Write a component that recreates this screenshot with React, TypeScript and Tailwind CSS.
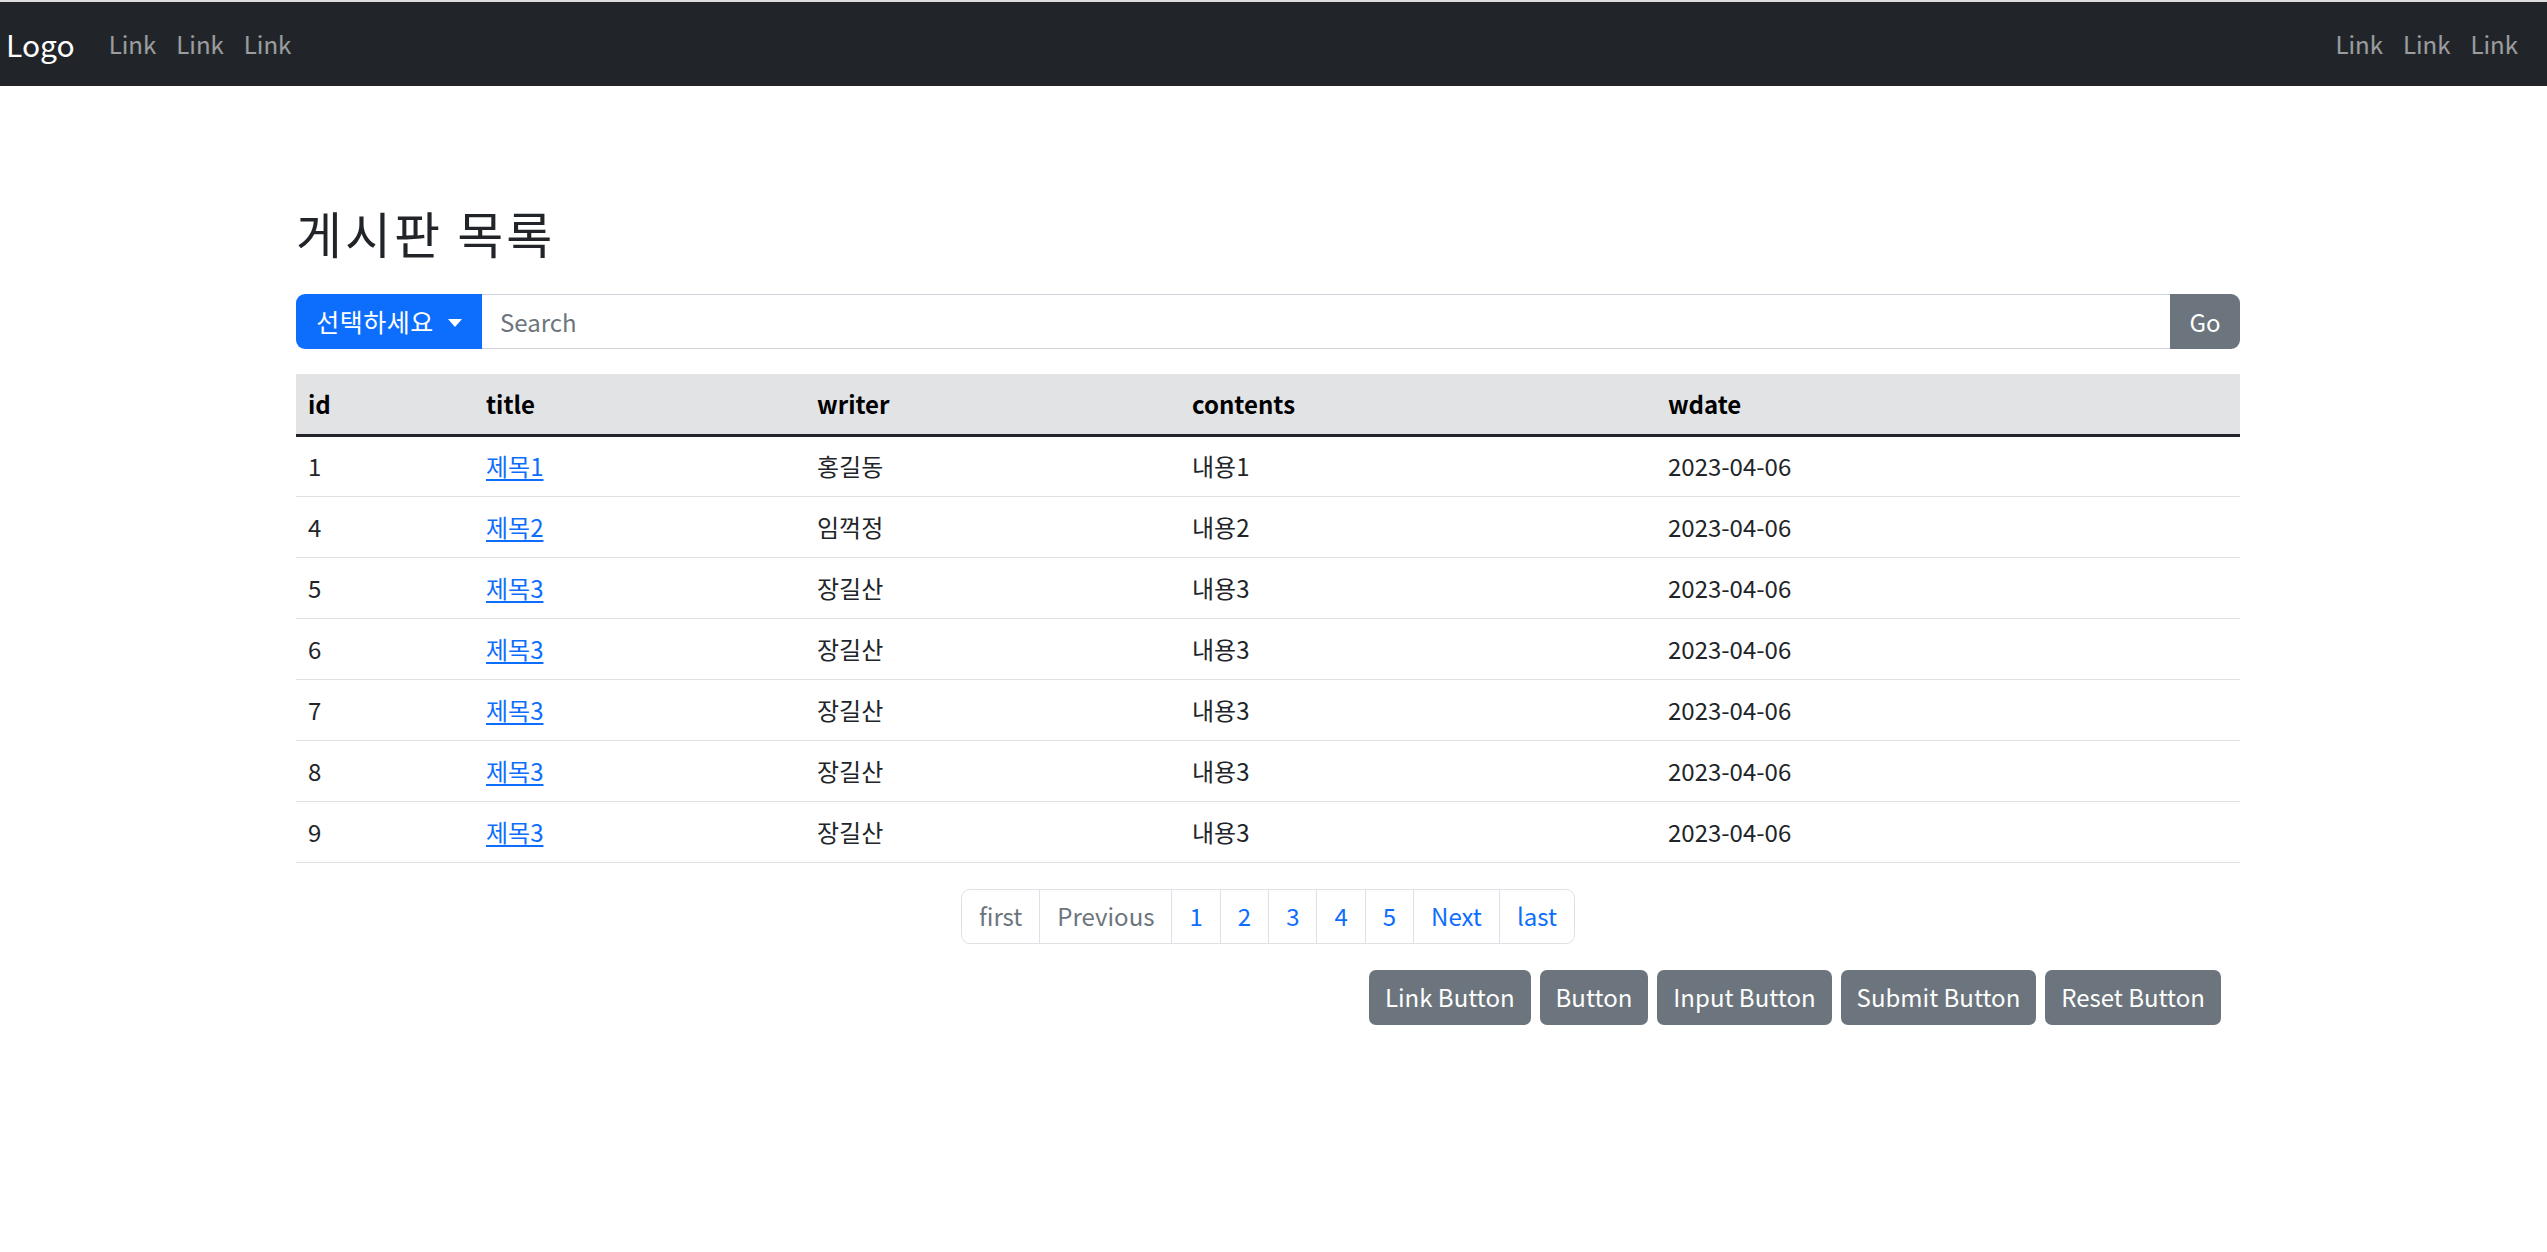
import React from 'react';

const FONT = '"Noto Sans CJK KR", "Noto Sans", sans-serif';

interface Post {
  id: number;
  title: string;
  writer: string;
  contents: string;
  wdate: string;
}

const POSTS: Post[] = [
  { id: 1, title: '제목1', writer: '홍길동', contents: '내용1', wdate: '2023-04-06' },
  { id: 4, title: '제목2', writer: '임꺽정', contents: '내용2', wdate: '2023-04-06' },
  { id: 5, title: '제목3', writer: '장길산', contents: '내용3', wdate: '2023-04-06' },
  { id: 6, title: '제목3', writer: '장길산', contents: '내용3', wdate: '2023-04-06' },
  { id: 7, title: '제목3', writer: '장길산', contents: '내용3', wdate: '2023-04-06' },
  { id: 8, title: '제목3', writer: '장길산', contents: '내용3', wdate: '2023-04-06' },
  { id: 9, title: '제목3', writer: '장길산', contents: '내용3', wdate: '2023-04-06' },
];

function Navbar() {
  const link = 'px-[10px] text-[24px] leading-[36px] text-white/55';
  return (
    <nav className="flex h-[86px] items-center justify-between border-t-2 border-[#dedede] bg-[#212529]">
      <div className="flex items-center pl-[6px]">
        <a className="mr-[24px] text-[30px] leading-[45px] text-white">Logo</a>
        <a className={link}>Link</a>
        <a className={link}>Link</a>
        <a className={link}>Link</a>
      </div>
      <div className="flex items-center pr-[19px]">
        <a className={link}>Link</a>
        <a className={link}>Link</a>
        <a className={link}>Link</a>
      </div>
    </nav>
  );
}

function SearchBar() {
  return (
    <div className="flex h-[55px] w-full">
      <button className="flex h-full w-[186px] items-center justify-center gap-[14px] rounded-l-[9px] bg-[#0d6efd] text-[25px] tracking-[0.5px] text-white">
        <span>선택하세요</span>
        <span className="mt-[2px] h-0 w-0 border-x-[7px] border-t-[8px] border-x-transparent border-t-white" />
      </button>
      <div className="flex h-full flex-1 items-center border-y border-[#ced4da] bg-white pl-[18px] text-[24px] text-[#6c757d]">
        Search
      </div>
      <button className="h-full w-[70px] rounded-r-[9px] bg-[#6c757d] text-[24px] text-white">Go</button>
    </div>
  );
}

function BoardTable() {
  const th = 'px-[12px] text-left font-bold text-black';
  const td = 'px-[12px] h-[61px] text-[#212529]';
  return (
    <table className="mt-[25px] w-full table-fixed border-collapse text-[24px]">
      <colgroup>
        <col className="w-[178px]" />
        <col className="w-[331px]" />
        <col className="w-[375px]" />
        <col className="w-[476px]" />
        <col />
      </colgroup>
      <thead>
        <tr className="h-[61px] bg-[#e2e3e5]">
          <th className={th}>id</th>
          <th className={th}>title</th>
          <th className={th}>writer</th>
          <th className={th}>contents</th>
          <th className={th}>wdate</th>
        </tr>
      </thead>
      <tbody className="border-t-[3px] border-[#212529]">
        {POSTS.map((p, i) => (
          <tr key={i} className="border-b border-[#dee2e6]">
            <td className={td}>{p.id}</td>
            <td className={td}>
              <a className="text-[#0d6efd] underline underline-offset-[3px]">{p.title}</a>
            </td>
            <td className={td}>{p.writer}</td>
            <td className={td}>{p.contents}</td>
            <td className={td}>{p.wdate}</td>
          </tr>
        ))}
      </tbody>
    </table>
  );
}

function Pagination() {
  const items = [
    { label: 'first', disabled: true },
    { label: 'Previous', disabled: true },
    { label: '1' },
    { label: '2' },
    { label: '3' },
    { label: '4' },
    { label: '5' },
    { label: 'Next' },
    { label: 'last' },
  ];
  return (
    <div className="mt-[26px] flex justify-center">
      <ul className="flex h-[55px] overflow-hidden rounded-[9px] border border-[#dee2e6] text-[24px]">
        {items.map((it, i) => (
          <li
            key={i}
            className={
              'flex items-center px-[17px] ' +
              (i > 0 ? 'border-l border-[#dee2e6] ' : '') +
              (it.disabled ? 'text-[#6c757d]' : 'text-[#0d6efd]')
            }
          >
            {it.label}
          </li>
        ))}
      </ul>
    </div>
  );
}

function ButtonRow() {
  const labels = ['Link Button', 'Button', 'Input Button', 'Submit Button', 'Reset Button'];
  return (
    <div className="mt-[26px] flex justify-end gap-[9px] pr-[19px]">
      {labels.map((l) => (
        <button key={l} className="h-[55px] rounded-[7px] bg-[#6c757d] px-[16px] text-[24px] text-white">
          {l}
        </button>
      ))}
    </div>
  );
}

export default function App() {
  return (
    <div className="min-h-[1252px] bg-white" style={{ fontFamily: FONT }}>
      <Navbar />
      <main className="ml-[296px] w-[1944px] pb-[40px]">
        <h2 className="mt-[116px] mb-[32px] text-[50px] leading-[60px] tracking-[3px] text-[#212529]">게시판 목록</h2>
        <SearchBar />
        <BoardTable />
        <Pagination />
        <ButtonRow />
      </main>
    </div>
  );
}
